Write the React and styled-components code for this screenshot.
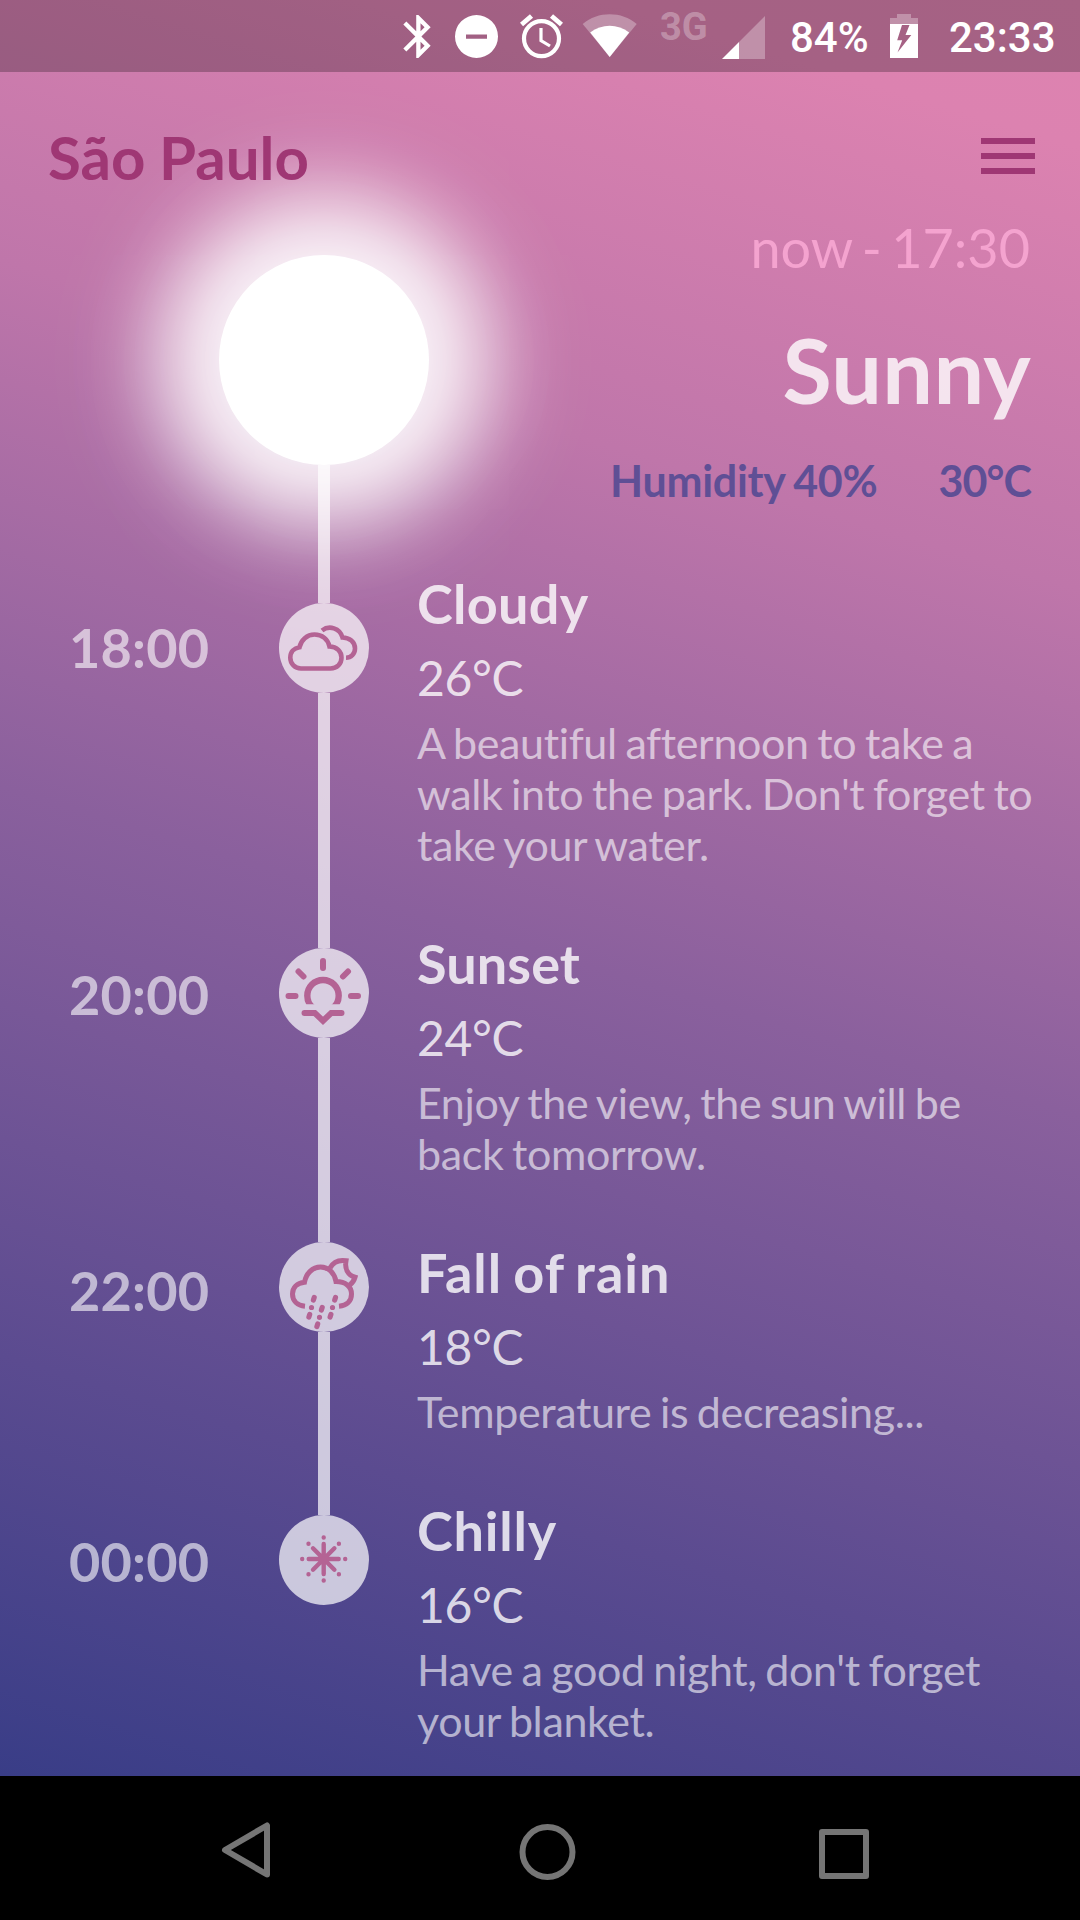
import React from "react";
import styled, { createGlobalStyle } from "styled-components";

const Global = createGlobalStyle`
  *, *::before, *::after { box-sizing: border-box; }
  html, body { margin: 0; padding: 0; background: #000; }
`;

const Screen = styled.div`
  width: 1080px;
  height: 1920px;
  overflow: hidden;
  display: flex;
  flex-direction: column;
  font-family: Lato, "Liberation Sans", sans-serif;
  font-variant-ligatures: none;
  color: #fff;
`;

const Sky = styled.div`
  height: 1776px;
  display: flex;
  flex-direction: column;
  background: linear-gradient(197deg, #de83b0 0%, #dc82b0 7%, #bf76aa 28%, #8a609d 53%, #5b4b90 80%, #393d87 100%);
`;

const StatusBar = styled.div`
  height: 72px;
  flex: none;
  display: flex;
  background: rgba(0, 0, 0, 0.25);
  padding-left: 403px;
  font-family: Roboto, "Liberation Sans", sans-serif;
  font-weight: 500;
`;

const StatusSlot = styled.div`
  width: ${(p) => p.$w}px;
  flex: none;
  padding-top: ${(p) => p.$top || 0}px;
  font-size: ${(p) => p.$size || 42}px;
  font-weight: ${(p) => (p.$dim ? 700 : 500)};
  line-height: 48px;
  white-space: nowrap;
  color: ${(p) => (p.$dim ? "rgba(255,255,255,0.3)" : "#fff")};
  svg { display: block; }
`;

const Header = styled.header`
  position: relative;
  z-index: 1;
  height: 148px;
  flex: none;
  display: flex;
  justify-content: space-between;
  padding: 47px 45px 0 48px;
`;

const City = styled.h1`
  margin: 0;
  font-size: 60px;
  line-height: 76px;
  font-weight: 700;
  word-spacing: -1px;
  color: #9f3774;
`;

const MenuButton = styled.button`
  width: 54px;
  height: 36px;
  margin-top: 19px;
  padding: 0;
  border: 0;
  background: none;
  display: flex;
  flex-direction: column;
  justify-content: space-between;
`;

const MenuLine = styled.span`
  height: 6px;
  background: #9f3774;
`;

const Now = styled.section`
  height: 383px;
  flex: none;
  display: flex;
  padding-left: 219px;
`;

const SunColumn = styled.div`
  width: 210px;
  height: 383px;
  padding-top: 35px;
  display: flex;
  flex-direction: column;
  align-items: center;
`;

const Sun = styled.div`
  width: 210px;
  height: 210px;
  flex: none;
  border-radius: 50%;
  background: #fff;
  box-shadow: 0 0 180px 50px rgba(255, 255, 255, 0.12), 0 0 84px 62px rgba(255, 255, 255, 0.9);
`;

const SunTail = styled.div`
  width: 12px;
  flex: 1;
  background: rgba(255, 255, 255, 0.7);
`;

const Current = styled.div`
  position: relative;
  flex: 1;
  padding: 0 48px 0 0;
  display: flex;
  flex-direction: column;
  align-items: flex-end;
`;

const Period = styled.div`
  margin: -2px 2px 0 0;
  font-size: 54px;
  line-height: 60px;
  word-spacing: -4.3px;
  color: #f4a3cf;
`;

const Condition = styled.h2`
  margin: 37px 1px 0 0;
  font-size: 90px;
  line-height: 108px;
  font-weight: 700;
  letter-spacing: 0.3px;
  color: rgba(255, 255, 255, 0.8);
`;

const Facts = styled.div`
  display: flex;
  gap: 61px;
  margin-top: 32px;
  padding-right: 1px;
  font-size: 43px;
  line-height: 52px;
  font-weight: 700;
  word-spacing: -1.5px;
  color: #5f4f95;
`;

const Fact = styled.span`
  letter-spacing: ${(p) => p.$track || 0}px;
`;

const Timeline = styled.main`
  flex: 1;
  display: flex;
  flex-direction: column;
`;

const Row = styled.article`
  height: ${(p) => p.$h}px;
  flex: none;
  display: flex;
`;

const Time = styled.time`
  width: 279px;
  padding: ${(p) => p.$top}px 0 0 69px;
  font-size: 54px;
  line-height: 64px;
  font-weight: 700;
  letter-spacing: 0.2px;
  color: rgba(255, 255, 255, 0.6);
`;

const Track = styled.div`
  width: 90px;
  display: flex;
  flex-direction: column;
  align-items: center;
`;

const Node = styled.div`
  width: 90px;
  height: 90px;
  flex: none;
  border-radius: 50%;
  background: rgba(255, 255, 255, 0.7);
  svg { display: block; }
`;

const Link = styled.div`
  width: 12px;
  flex: 1;
  background: rgba(255, 255, 255, 0.7);
`;

const Details = styled.div`
  flex: 1;
  padding-left: 48px;
  margin-top: ${(p) => p.$shift}px;
`;

const Title = styled.h3`
  margin: 0;
  font-size: 54px;
  line-height: 64px;
  font-weight: 700;
  letter-spacing: ${(p) => p.$track}px;
  word-spacing: -3px;
  color: rgba(255, 255, 255, 0.8);
`;

const Degrees = styled.div`
  margin-top: 13px;
  font-size: 48px;
  line-height: 58px;
  letter-spacing: -0.4px;
  color: rgba(255, 255, 255, 0.8);
`;

const Note = styled.p`
  margin: 10px 0 0;
  font-size: 43px;
  line-height: 51px;
  white-space: pre-line;
  word-spacing: -2px;
  letter-spacing: -0.36px;
  color: rgba(255, 255, 255, 0.6);
`;

const NavBar = styled.nav`
  height: 144px;
  flex: none;
  background: #000;
  display: flex;
  gap: 241px;
  padding: 41px 0 0 216px;
`;

const INK = "#b46394";

const Clouds = () => (
  <svg width="90" height="90" viewBox="0 0 90 90" fill="none" stroke={INK} strokeWidth="4.6">
    <path d="M22 65.500H51.500c6.500 0 11-4.800 11-10.800s-4.500-11-12-11.200C49 36 43 31.500 35.500 31.500S22 37 20.500 44.200C15 45 11.300 49 11.300 54.800c0 6 4.700 10.700 10.700 10.700Z" />
    <path d="M43 27.500C50 22 61 25 63.500 34.500 70.500 34.500 76 39 76 45.500c0 5.500-4 9.300-9 9.300" />
  </svg>
);

const Sunset = () => (
  <svg width="90" height="90" viewBox="0 0 90 90" fill="none" stroke={INK} strokeWidth="6" strokeLinecap="round">
    <clipPath id="horizon"><path d="M20 20h50v36.300H20Z" /></clipPath>
    <path d="M44 13v7M19.500 23.500l5 5M69 23.500l-5 5M9.500 48h7M72 48h7M25.500 65H35.800L44 72.800 52.200 65H62.500" />
    <circle cx="44" cy="47.700" r="15.700" strokeWidth="6.400" clipPath="url(#horizon)" />
  </svg>
);

const Rain = () => (
  <svg width="90" height="90" viewBox="0 0 90 90" fill="none" stroke={INK} strokeWidth="5">
    <path d="M26 64.200C18.500 63.500 13.500 58.800 13.500 52c0-6.500 4.500-11 12-11.800C27 31.500 33.500 25 41.500 25c8 0 14 6 15.500 14.500 9.500 0 15.500 5 15.500 12.500 0 7-4.500 11.500-12.500 12.200" />
    <path d="M51 26c3.500-6.500 9.500-8.300 16-7.300-1.500 8.300 2 14.500 9 16.500-1 3.500-2.800 6-5.500 8" />
    <path strokeLinecap="round" strokeWidth="5.200" d="M35.200 55.500l-.8 2.500M56.500 55.500l-.8 2.500M43.200 65.500l-.8 2.500M30.700 72.500l-.8 2.500M51.900 72.500l-.8 2.500M38.700 82l-.8 2.500" />
    <path strokeLinecap="round" strokeWidth="5.200" d="M32.500 65.500v.01M53.500 65.500v.01M40.500 75.300v.01" />
  </svg>
);

const Snow = () => (
  <svg width="90" height="90" viewBox="0 0 90 90" fill="none" stroke={INK} strokeWidth="4.400" strokeLinecap="round">
    <path d="M44.700 29v30M29.700 44h30M34 33.300l21.400 21.400M55.400 33.300L34 54.700" />
    <path d="M44.700 22.500v.01M44.700 65.500v.01M23.200 44v.01M66.200 44v.01M29.500 28.800v.01M59.900 28.800v.01M29.500 59.200v.01M59.900 59.200v.01" />
  </svg>
);

const rows = [
  { time: "18:00", top: 13, h: 344.5, shift: -31, track: 0.3, icon: <Clouds />, title: "Cloudy", deg: "26°C", note: "A beautiful afternoon to take a\nwalk into the park. Don't forget to\ntake your water." },
  { time: "20:00", top: 15, h: 294, shift: -15.5, track: 0.1, icon: <Sunset />, title: "Sunset", deg: "24°C", note: "Enjoy the view, the sun will be\nback tomorrow." },
  { time: "22:00", top: 17, h: 273, shift: -0.5, track: 1, icon: <Rain />, title: "Fall of rain", deg: "18°C", note: "Temperature is decreasing..." },
  { time: "00:00", top: 15, h: 261.5, shift: -15.5, track: 0.8, icon: <Snow />, title: "Chilly", deg: "16°C", note: "Have a good night, don't forget\nyour blanket." },
];

export default function App() {
  return (
    <Screen>
      <Global />
      <Sky>
        <StatusBar>
          <StatusSlot $w={52} $top={15}>
            <svg width="28" height="43" viewBox="4.850 2 13.020 20" fill="#fff">
              <path d="M17.710 7.710L12 2h-1v7.590L6.410 5 5 6.410 10.590 12 5 17.590 6.410 19 11 14.410V22h1l5.710-5.710-4.300-4.290 4.300-4.290zM13 5.830l1.880 1.880L13 9.590V5.830zm1.880 10.460L13 18.170v-3.760l1.880 1.880z" />
            </svg>
          </StatusSlot>
          <StatusSlot $w={65} $top={15}>
            <svg width="43" height="43" viewBox="0 0 43 43">
              <path fillRule="evenodd" fill="#fff" d="M21.500 0a21.500 21.500 0 1 0 0 43 21.500 21.500 0 0 0 0-43ZM11 19.500h21v4.200H11Z" />
            </svg>
          </StatusSlot>
          <StatusSlot $w={62} $top={14}>
            <svg width="43" height="45" viewBox="0 0 43 45" fill="none" stroke="#fff" strokeWidth="4.200">
              <circle cx="21.500" cy="24.600" r="17.500" />
              <path strokeWidth="4.800" d="M1.500 10.500l10-8.500M41.500 10.500l-10-8.500" />
              <path strokeWidth="3.200" d="M21 14v12.500l9 5.500" />
            </svg>
          </StatusSlot>
          <StatusSlot $w={78} $top={14}>
            <svg width="55" height="43" viewBox="-0.700 0 55 43" fill="#fff">
              <path opacity=".3" d="M0 10C15-3 39-3 54 10L27 43Z" />
              <path d="M7.500 18.500C19 9.500 35 9.500 46.500 18.500L27 43Z" />
            </svg>
          </StatusSlot>
          <StatusSlot $w={62} $top={2.500} $size={38} $dim>3G</StatusSlot>
          <StatusSlot $w={68} $top={16}>
            <svg width="43" height="43" viewBox="0 0 43 43" fill="#fff">
              <path opacity=".3" d="M17 26L43 0v43H17Z" />
              <path d="M0 43L17 26v17Z" />
            </svg>
          </StatusSlot>
          <StatusSlot $w={100} $top={14}>84%</StatusSlot>
          <StatusSlot $w={59} $top={14}>
            <svg width="28" height="44" viewBox="0 0 28 44" fill="#fff">
              <path opacity=".3" d="M7 0h14v4h7v6H0V4h7Z" />
              <path fillRule="evenodd" d="M0 10h28v34H0ZM12 11L7.200 26.300h5L7.500 38.500 21.300 21H15.500L19.500 11Z" />
            </svg>
          </StatusSlot>
          <StatusSlot $w={120} $top={14}>23:33</StatusSlot>
        </StatusBar>

        <Header>
          <City>São Paulo</City>
          <MenuButton aria-label="Menu">
            <MenuLine /><MenuLine /><MenuLine />
          </MenuButton>
        </Header>

        <Now>
          <SunColumn>
            <Sun />
            <SunTail />
          </SunColumn>
          <Current>
            <Period>now - 17:30</Period>
            <Condition>Sunny</Condition>
            <Facts>
              <Fact $track={-0.3}>Humidity 40%</Fact>
              <Fact $track={-0.9}>30°C</Fact>
            </Facts>
          </Current>
        </Now>

        <Timeline>
          {rows.map((r, i) => (
            <Row key={r.time} $h={r.h}>
              <Time $top={r.top}>{r.time}</Time>
              <Track>
                <Node>{r.icon}</Node>
                {i < rows.length - 1 && <Link />}
              </Track>
              <Details $shift={r.shift}>
                <Title $track={r.track}>{r.title}</Title>
                <Degrees>{r.deg}</Degrees>
                <Note>{r.note}</Note>
              </Details>
            </Row>
          ))}
        </Timeline>
      </Sky>
      <NavBar>
        <svg width="60" height="70" viewBox="0 0 60 70" fill="none" stroke="#757575" strokeWidth="6" strokeLinejoin="round">
          <path d="M51 8.500v49L9 33Z" />
        </svg>
        <svg width="60" height="70" viewBox="0 0 60 70" fill="none" stroke="#757575" strokeWidth="6">
          <circle cx="30.500" cy="35" r="25" />
        </svg>
        <svg width="60" height="70" viewBox="0 0 60 70" fill="none" stroke="#757575" strokeWidth="6" strokeLinejoin="round">
          <path d="M4 15h44v44H4Z" />
        </svg>
      </NavBar>
    </Screen>
  );
}
